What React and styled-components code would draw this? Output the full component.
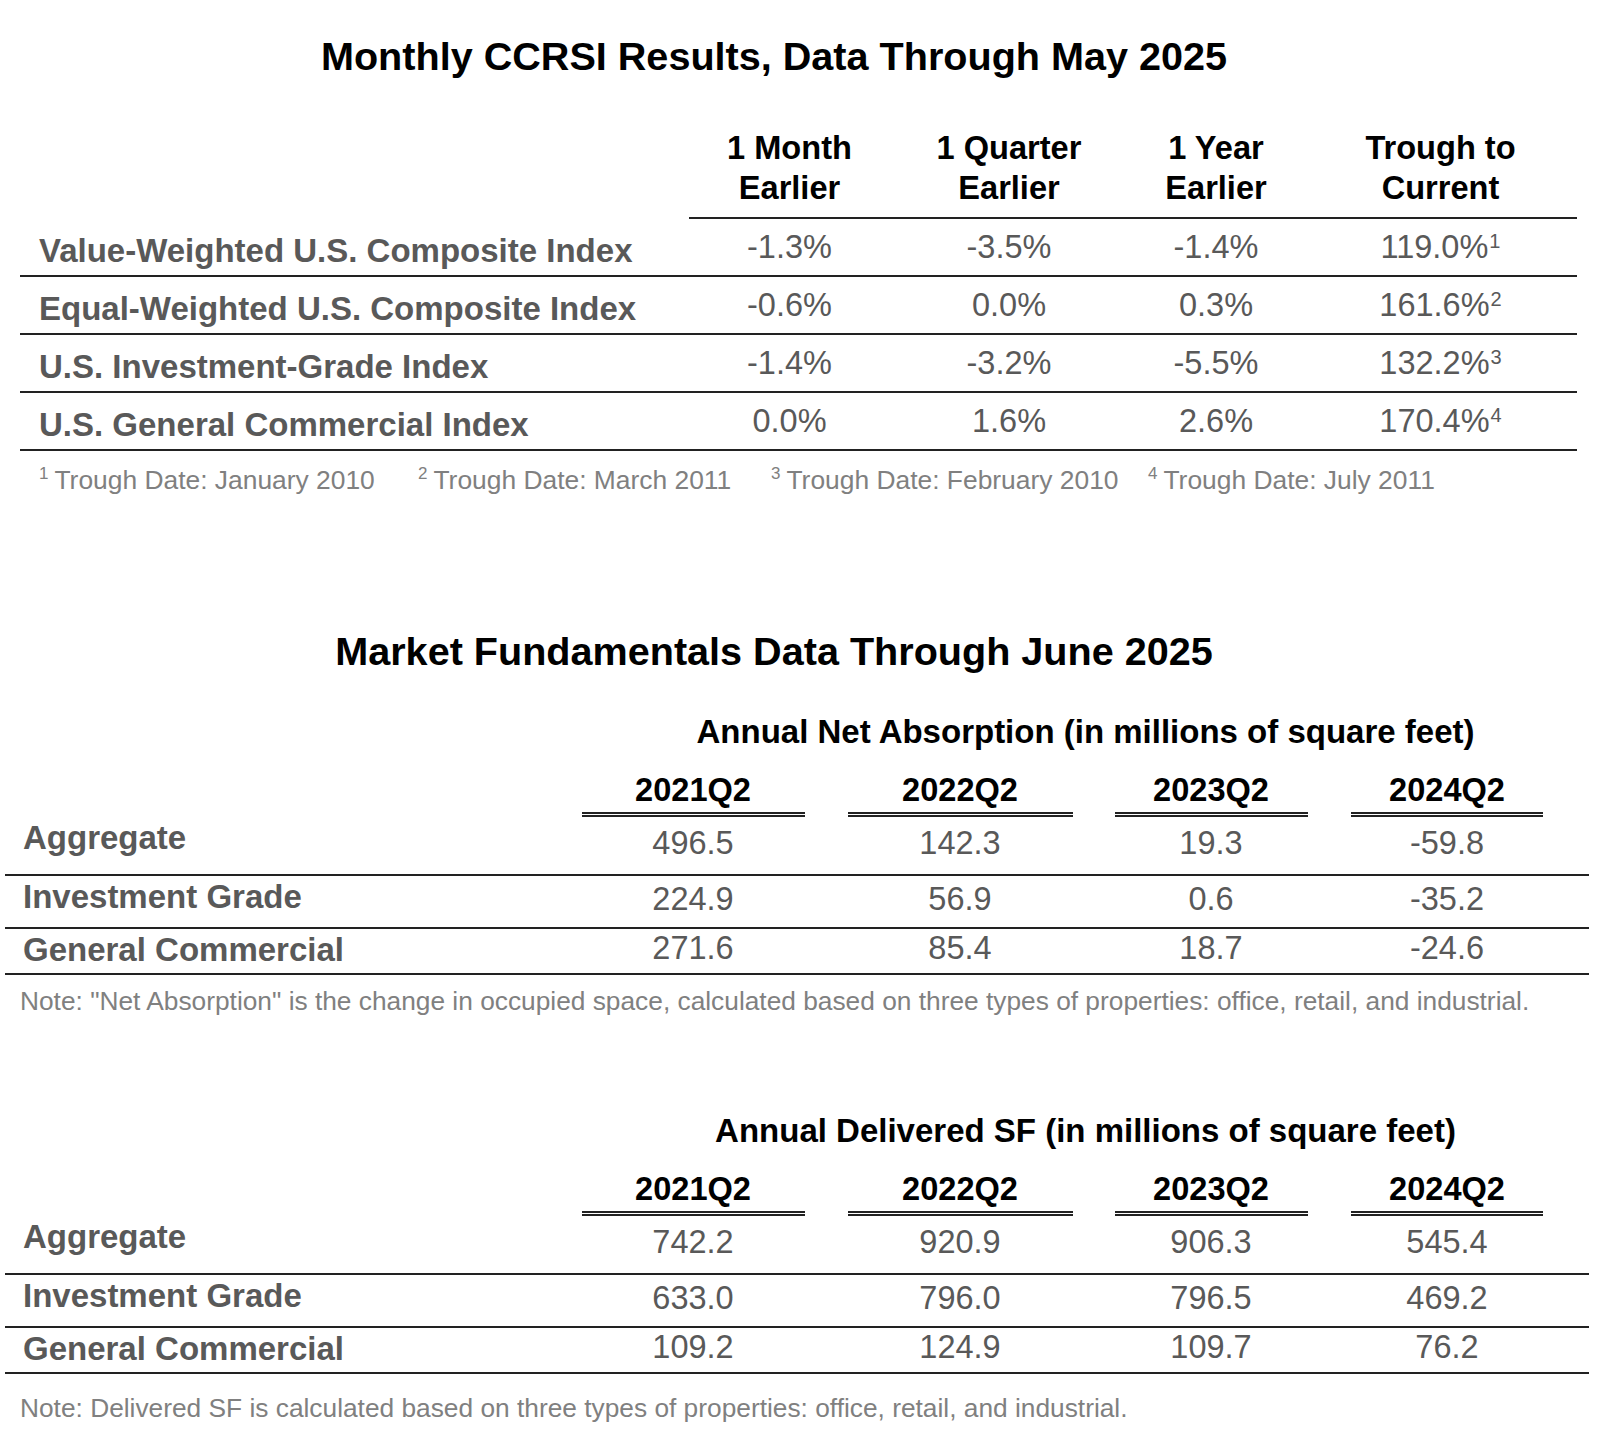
import React from "react";
import styled, { createGlobalStyle } from "styled-components";

const Global = createGlobalStyle`
  html, body { margin: 0; padding: 0; background: #ffffff; }
  body { font-family: "Liberation Sans", Arial, Helvetica, sans-serif; }
`;

const Page = styled.div`
  width: 1600px;
  min-height: 1451px;
  box-sizing: border-box;
  padding-top: 34px;
  background: #ffffff;
  font-family: "Liberation Sans", Arial, Helvetica, sans-serif;
`;

const Title = styled.h1`
  margin: ${(p) => p.$mt || 0}px 0 0;
  width: 1548px;
  text-align: center;
  font-size: 39.6px;
  line-height: 45px;
  font-weight: 700;
  color: #000;
`;

/* ---------- Table 1 ---------- */
const T1_COLS = "669px 201px 238px 176px 273px";

const T1Head = styled.div`
  margin: 49px 0 0 20px;
  width: 1557px;
  display: grid;
  grid-template-columns: ${T1_COLS};
`;

const T1HeadCell = styled.div`
  text-align: center;
  font-size: 32.6px;
  line-height: 40px;
  font-weight: 700;
  color: #000;
  padding-bottom: 9px;
  border-bottom: ${(p) => (p.$blank ? "none" : "2px solid #222")};
`;

const T1Row = styled.div`
  margin-left: 20px;
  width: 1557px;
  height: 56px;
  display: grid;
  grid-template-columns: ${T1_COLS};
  border-bottom: 2px solid #222;
`;

const T1Label = styled.div`
  align-self: center;
  padding: 6px 0 0 19px;
  font-size: 33px;
  line-height: 37px;
  font-weight: 700;
  color: #595959;
  white-space: nowrap;
`;

const T1Value = styled.div`
  align-self: center;
  text-align: center;
  font-size: 32.5px;
  line-height: 37px;
  color: #595959;
  white-space: nowrap;
`;

const ValueSup = styled.sup`
  font-size: 20px;
  vertical-align: 0.5em;
  line-height: 0;
  margin-left: 1px;
`;

const Footnotes = styled.div`
  margin: 14px 0 0 39px;
  display: grid;
  grid-template-columns: 379px 353px 377px auto;
  font-size: 26.4px;
  line-height: 30px;
  color: #808080;
  white-space: nowrap;
`;

const FootSup = styled.sup`
  font-size: 17px;
  vertical-align: 0.6em;
  line-height: 0;
  margin-right: 6px;
`;

/* ---------- Tables 2 & 3 ---------- */
const T2_COLS = "554px 268px 266px 236px 236px";

const SubTitle = styled.h2`
  margin: ${(p) => p.$mt}px 0 0 582px;
  width: 1007px;
  text-align: center;
  font-size: 33px;
  line-height: 38px;
  font-weight: 700;
  color: #000;
  white-space: nowrap;
`;

const T2Head = styled.div`
  margin: 20px 0 0 5px;
  width: 1584px;
  display: grid;
  grid-template-columns: ${T2_COLS};
`;

const T2HeadCell = styled.div`
  display: flex;
  flex-direction: column;
  align-items: center;
  font-size: 32.6px;
  line-height: 38px;
  font-weight: 700;
  color: #000;
`;

const DoubleRule = styled.div`
  width: ${(p) => p.$w}px;
  height: 0;
  margin-top: 3px;
  border-top: 5px double #222;
`;

const T2Row = styled.div`
  margin-left: 5px;
  width: 1584px;
  height: ${(p) => p.$h}px;
  display: grid;
  grid-template-columns: ${T2_COLS};
  border-bottom: 2px solid #222;
`;

const T2Label = styled.div`
  align-self: start;
  padding: 2px 0 0 18px;
  font-size: 33px;
  line-height: 37px;
  font-weight: 700;
  color: #595959;
  white-space: nowrap;
`;

const T2Value = styled.div`
  align-self: center;
  padding-bottom: 5px;
  text-align: center;
  font-size: 32.5px;
  line-height: 37px;
  color: #595959;
`;

const Note = styled.p`
  margin: ${(p) => p.$mt}px 0 0 20px;
  font-size: 26.3px;
  line-height: 30px;
  color: #808080;
  white-space: nowrap;
`;

/* ---------- Data ---------- */
const ccrsiRows = [
  ["Value-Weighted U.S. Composite Index", "-1.3%", "-3.5%", "-1.4%", "119.0%", "1"],
  ["Equal-Weighted U.S. Composite Index", "-0.6%", "0.0%", "0.3%", "161.6%", "2"],
  ["U.S. Investment-Grade Index", "-1.4%", "-3.2%", "-5.5%", "132.2%", "3"],
  ["U.S. General Commercial Index", "0.0%", "1.6%", "2.6%", "170.4%", "4"],
];

const footnotes = [
  ["1", "Trough Date: January 2010"],
  ["2", "Trough Date: March 2011"],
  ["3", "Trough Date: February 2010"],
  ["4", "Trough Date: July 2011"],
];

const quarters = [
  ["2021Q2", 223],
  ["2022Q2", 225],
  ["2023Q2", 193],
  ["2024Q2", 192],
];

const rowHeights = [57, 51, 44];

const absorption = [
  ["Aggregate", "496.5", "142.3", "19.3", "-59.8"],
  ["Investment Grade", "224.9", "56.9", "0.6", "-35.2"],
  ["General Commercial", "271.6", "85.4", "18.7", "-24.6"],
];

const delivered = [
  ["Aggregate", "742.2", "920.9", "906.3", "545.4"],
  ["Investment Grade", "633.0", "796.0", "796.5", "469.2"],
  ["General Commercial", "109.2", "124.9", "109.7", "76.2"],
];

function QuarterTable({ title, titleMt, rows }) {
  return (
    <>
      <SubTitle $mt={titleMt}>{title}</SubTitle>
      <T2Head>
        <div />
        {quarters.map(([q, w]) => (
          <T2HeadCell key={q}>
            {q}
            <DoubleRule $w={w} />
          </T2HeadCell>
        ))}
      </T2Head>
      {rows.map((r, i) => (
        <T2Row key={r[0]} $h={rowHeights[i]}>
          <T2Label>{r[0]}</T2Label>
          {r.slice(1).map((v, j) => (
            <T2Value key={j}>{v}</T2Value>
          ))}
        </T2Row>
      ))}
    </>
  );
}

export default function App() {
  return (
    <Page>
      <Global />
      <Title>Monthly CCRSI Results, Data Through May 2025</Title>

      <T1Head>
        <T1HeadCell $blank />
        <T1HeadCell>1 Month<br />Earlier</T1HeadCell>
        <T1HeadCell>1 Quarter<br />Earlier</T1HeadCell>
        <T1HeadCell>1 Year<br />Earlier</T1HeadCell>
        <T1HeadCell>Trough to<br />Current</T1HeadCell>
      </T1Head>
      {ccrsiRows.map((r) => (
        <T1Row key={r[0]}>
          <T1Label>{r[0]}</T1Label>
          <T1Value>{r[1]}</T1Value>
          <T1Value>{r[2]}</T1Value>
          <T1Value>{r[3]}</T1Value>
          <T1Value>
            {r[4]}
            <ValueSup>{r[5]}</ValueSup>
          </T1Value>
        </T1Row>
      ))}
      <Footnotes>
        {footnotes.map(([n, t]) => (
          <span key={n}>
            <FootSup>{n}</FootSup>
            {t}
          </span>
        ))}
      </Footnotes>

      <Title $mt={134}>Market Fundamentals Data Through June 2025</Title>
      <QuarterTable
        title="Annual Net Absorption (in millions of square feet)"
        titleMt={39}
        rows={absorption}
      />
      <Note $mt={11}>
        Note: "Net Absorption" is the change in occupied space, calculated based on three types of properties: office, retail, and industrial.
      </Note>

      <QuarterTable
        title="Annual Delivered SF (in millions of square feet)"
        titleMt={96}
        rows={delivered}
      />
      <Note $mt={19}>
        Note: Delivered SF is calculated based on three types of properties: office, retail, and industrial.
      </Note>
    </Page>
  );
}
